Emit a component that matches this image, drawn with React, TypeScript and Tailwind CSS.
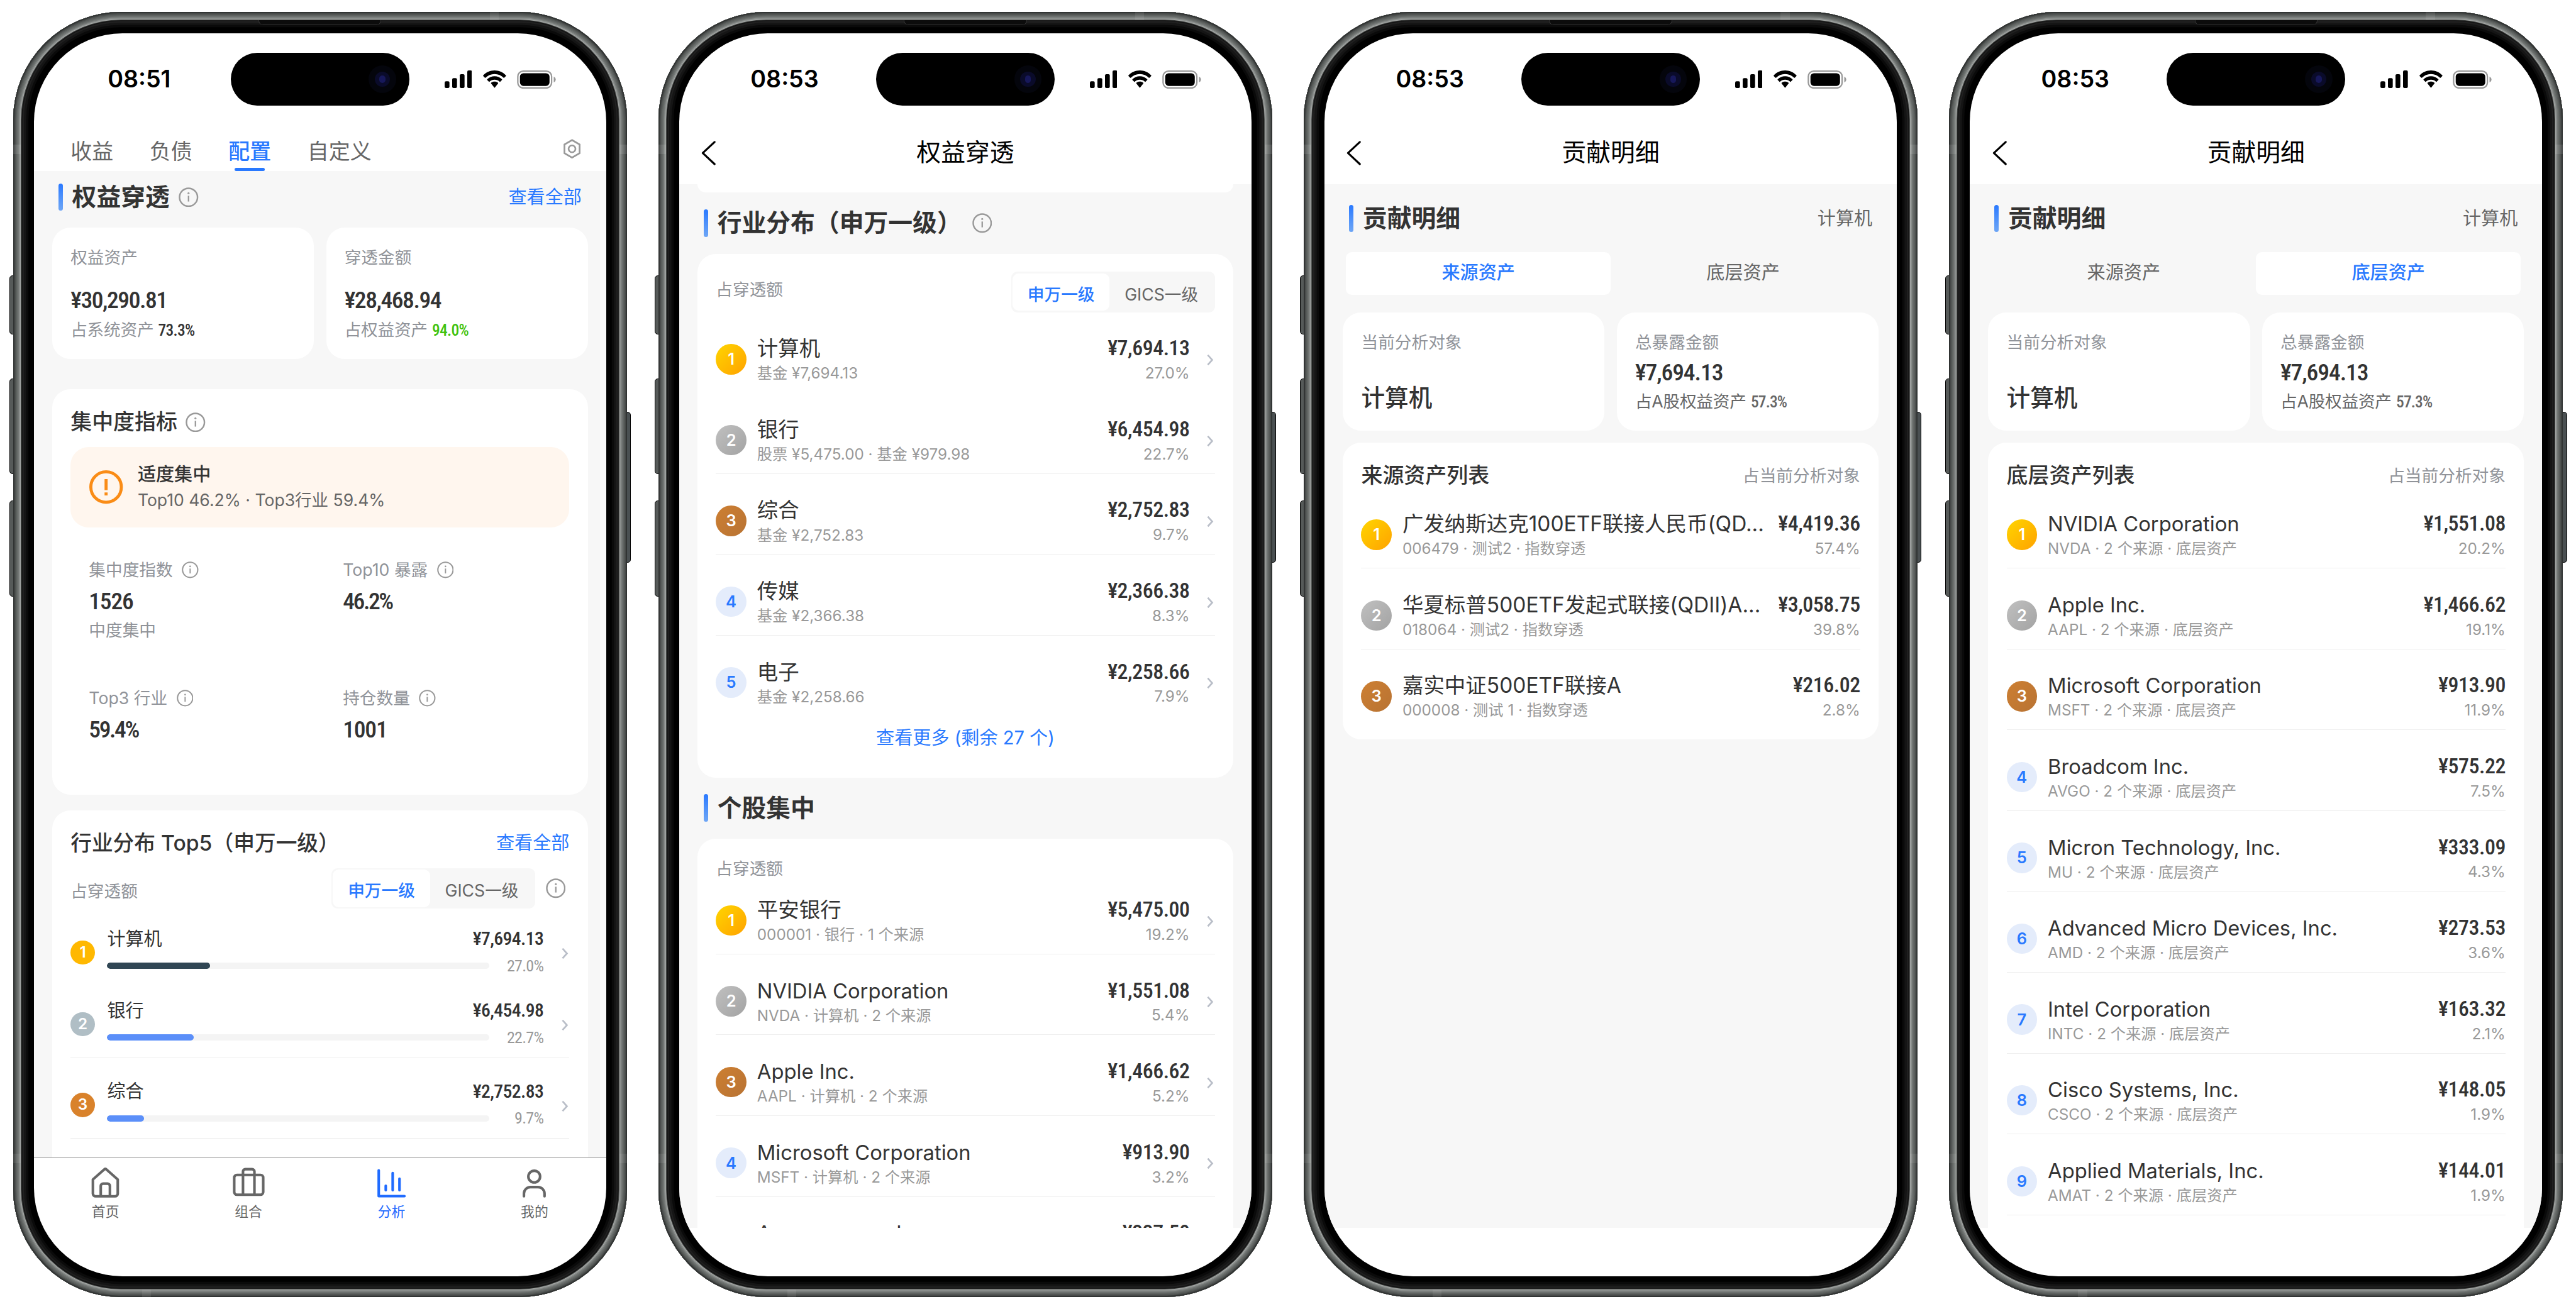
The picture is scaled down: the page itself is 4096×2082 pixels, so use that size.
import clsx from "clsx"
import type { ReactNode } from "react"

type Holding = { name: string; sub?: string; amount: string; pct?: string }

const topIndustries = [
  { name: "计算机", amount: "¥7,694.13", pct: 27.0, badge: "bg-[#ffb800]", bar: "bg-[#304654]" },
  { name: "银行", amount: "¥6,454.98", pct: 22.7, badge: "bg-[#b0bec5]", bar: "bg-[#5b8ff9]" },
  { name: "综合", amount: "¥2,752.83", pct: 9.7, badge: "bg-[#d9822b]", bar: "bg-[#5b8ff9]" },
]

const industries: Holding[] = [
  { name: "计算机", sub: "基金 ¥7,694.13", amount: "¥7,694.13", pct: "27.0%" },
  { name: "银行", sub: "股票 ¥5,475.00 · 基金 ¥979.98", amount: "¥6,454.98", pct: "22.7%" },
  { name: "综合", sub: "基金 ¥2,752.83", amount: "¥2,752.83", pct: "9.7%" },
  { name: "传媒", sub: "基金 ¥2,366.38", amount: "¥2,366.38", pct: "8.3%" },
  { name: "电子", sub: "基金 ¥2,258.66", amount: "¥2,258.66", pct: "7.9%" },
]

const stocks: Holding[] = [
  { name: "平安银行", sub: "000001 · 银行 · 1 个来源", amount: "¥5,475.00", pct: "19.2%" },
  { name: "NVIDIA Corporation", sub: "NVDA · 计算机 · 2 个来源", amount: "¥1,551.08", pct: "5.4%" },
  { name: "Apple Inc.", sub: "AAPL · 计算机 · 2 个来源", amount: "¥1,466.62", pct: "5.2%" },
  { name: "Microsoft Corporation", sub: "MSFT · 计算机 · 2 个来源", amount: "¥913.90", pct: "3.2%" },
  { name: "Amazon.com, Inc.", amount: "¥337.50" },
]

const funds: Holding[] = [
  { name: "广发纳斯达克100ETF联接人民币(QD...", sub: "006479 · 测试2 · 指数穿透", amount: "¥4,419.36", pct: "57.4%" },
  { name: "华夏标普500ETF发起式联接(QDII)A...", sub: "018064 · 测试2 · 指数穿透", amount: "¥3,058.75", pct: "39.8%" },
  { name: "嘉实中证500ETF联接A", sub: "000008 · 测试 1 · 指数穿透", amount: "¥216.02", pct: "2.8%" },
]

const underlying: Holding[] = [
  { name: "NVIDIA Corporation", sub: "NVDA · 2 个来源 · 底层资产", amount: "¥1,551.08", pct: "20.2%" },
  { name: "Apple Inc.", sub: "AAPL · 2 个来源 · 底层资产", amount: "¥1,466.62", pct: "19.1%" },
  { name: "Microsoft Corporation", sub: "MSFT · 2 个来源 · 底层资产", amount: "¥913.90", pct: "11.9%" },
  { name: "Broadcom Inc.", sub: "AVGO · 2 个来源 · 底层资产", amount: "¥575.22", pct: "7.5%" },
  { name: "Micron Technology, Inc.", sub: "MU · 2 个来源 · 底层资产", amount: "¥333.09", pct: "4.3%" },
  { name: "Advanced Micro Devices, Inc.", sub: "AMD · 2 个来源 · 底层资产", amount: "¥273.53", pct: "3.6%" },
  { name: "Intel Corporation", sub: "INTC · 2 个来源 · 底层资产", amount: "¥163.32", pct: "2.1%" },
  { name: "Cisco Systems, Inc.", sub: "CSCO · 2 个来源 · 底层资产", amount: "¥148.05", pct: "1.9%" },
  { name: "Applied Materials, Inc.", sub: "AMAT · 2 个来源 · 底层资产", amount: "¥144.01", pct: "1.9%" },
]

const metrics = [
  { label: "集中度指数", value: "1526", note: "中度集中" },
  { label: "Top10 暴露", value: "46.2%" },
  { label: "Top3 行业", value: "59.4%" },
  { label: "持仓数量", value: "1001" },
]

function InfoIcon({ className }: { className?: string }) {
  return (
    <svg viewBox="0 0 26 26" className={clsx("shrink-0 text-[#999]", className)} fill="none" stroke="currentColor">
      <circle cx="13" cy="13" r="11.8" strokeWidth="2" />
      <path d="M13 11v7.6" strokeWidth="1.9" />
      <circle cx="13" cy="7.6" r="1.3" fill="currentColor" stroke="none" />
    </svg>
  )
}

function Chevron() {
  return (
    <svg viewBox="0 0 9 14" className="h-3.5 w-[9px]" fill="none" stroke="#b9bec8" strokeWidth="2.200">
      <path d="M1.2 0.6 L7 7 L1.2 13.4" />
    </svg>
  )
}

function StatusBar({ time }: { time: string }) {
  return (
    <div className="flex h-[121px] shrink-0 items-center">
      <div className="w-[258px] pl-[18px] text-center text-[31px] font-semibold text-black">{time}</div>
      <div className="flex h-[69px] w-[234px] items-center justify-end rounded-full bg-black pr-[17px]">
        <div className="flex h-9 w-9 items-center justify-center rounded-full bg-[#04050c]">
          <div className="flex h-5 w-5 items-center justify-center rounded-full bg-[#0a0b2a]">
            <div className="h-2.5 w-2 rounded-full bg-[#17185a]" />
          </div>
        </div>
      </div>
      <div className="flex items-center pl-[46px]">
        <svg viewBox="0 0 19.4 12.4" className="h-[23px] w-9">
          <rect x="0" y="7.7" width="3.4" height="4.7" rx="1" />
          <rect x="5.33" y="5.4" width="3.4" height="7" rx="1" />
          <rect x="10.67" y="2.7" width="3.4" height="9.7" rx="1" />
          <rect x="16" y="0" width="3.4" height="12.4" rx="1" />
        </svg>
        <svg viewBox="0 0 17 12.4" className="ml-3.5 h-[23px] w-8">
          <path d="M8.5 2.6c2.5 0 4.7 1 6.4 2.6.1.1.3.1.4 0l1.2-1.2c.2-.2.2-.4 0-.6C14.300 1.200 11.500 0 8.500 0S2.700 1.200.5 3.400c-.2.2-.2.4 0 .6l1.200 1.200c.1.1.3.1.4 0C3.800 3.600 6 2.600 8.500 2.600zm0 4c1.400 0 2.600.5 3.600 1.400.1.1.3.1.4 0l1.200-1.200c.2-.2.2-.4 0-.6C12.300 4.900 10.500 4.100 8.500 4.100s-3.800.8-5.200 2.100c-.2.2-.2.4 0 .6L4.500 8c.1.1.3.1.4 0 1-.9 2.200-1.400 3.600-1.400zm2.400 2.700c.2-.2.2-.4 0-.6-.7-.5-1.500-.8-2.400-.8s-1.700.3-2.400.8c-.2.200-.2.4 0 .6l2.200 2.800c.1.200.3.200.4 0z" />
        </svg>
        <svg viewBox="0 0 27.4 13" className="ml-[13px] h-6 w-[51px]">
          <rect x="0.5" y="0.5" width="24" height="12" rx="3.8" fill="none" stroke="#999" />
          <rect x="2" y="2" width="21" height="9" rx="2.5" />
          <path d="M26 4.500c.9.300 1.400 1.100 1.400 2s-.5 1.700-1.400 2z" fill="#999" />
        </svg>
      </div>
    </div>
  )
}

// Device frame; children are laid out on a 750-unit wide canvas
function Phone({ time, children }: { time: string; children: ReactNode }) {
  return (
    <div className="relative h-[1685px] w-[805px] shrink-0">
      <div className="absolute top-[345px] -left-[5px] h-[78px] w-2.5 rounded-sm border border-black bg-[#565a59]" />
      <div className="absolute top-[480px] -left-[5px] h-[126px] w-2.5 rounded-sm border border-black bg-[#565a59]" />
      <div className="absolute top-[640px] -left-[5px] h-[126px] w-2.5 rounded-sm border border-black bg-[#565a59]" />
      <div className="absolute top-[524px] -right-[5px] h-[198px] w-2.5 rounded-sm border border-black bg-[#4a5052]" />
      <div className="relative h-full w-full rounded-[141px] bg-black p-[27.5px] shadow-[inset_0_0_0_1.5px_#303332,inset_0_0_0_3px_#484b4a,inset_0_0_0_4.500px_#585c5a,inset_0_0_0_6px_#656967,inset_0_0_0_7.500px_#737775,inset_0_0_0_9px_#8a8e8c,inset_0_0_0_10px_#a4a7a5,inset_0_0_0_11px_#3c3e3d,inset_0_0_0_12px_#111,inset_0_0_0_14px_#202020,inset_0_0_0_17px_#151515,inset_0_0_0_20px_#0a0a0a]">
        <div className="absolute top-0 left-[625px] h-2.5 w-3 bg-white/8" />
        <div className="absolute bottom-0 left-[169px] h-2.5 w-3 bg-white/8" />
        <div className="absolute top-[174px] left-0 h-3 w-2.5 bg-white/10" />
        <div className="absolute top-[174px] right-0 h-3 w-2.5 bg-white/10" />
        <div className="absolute bottom-[176px] left-0 h-3 w-2.5 bg-white/8" />
        <div className="absolute right-0 bottom-[176px] h-3 w-2.5 bg-white/8" />
        <div className="absolute top-2.5 left-[322px] h-[7px] w-[161px] rounded-b-md border border-t-0 border-[#333] bg-[#0c0c0c]" />
        <div className="flex h-[1630px] w-[750px] flex-col overflow-hidden rounded-[116px] bg-white">
          <StatusBar time={time} />
          {children}
        </div>
      </div>
    </div>
  )
}

function NavHeader({ title }: { title: string }) {
  return (
    <div className="grid h-[77px] shrink-0 grid-cols-3 items-center pb-2">
      <svg viewBox="0 0 19 32" className="mt-1 ml-[29px] h-8 w-[19px]" fill="none" stroke="black" strokeWidth="2.600">
        <path d="M17.500 1.500 L2 16 L17.500 30.500" strokeLinecap="round" strokeLinejoin="round" />
      </svg>
      <h1 className="text-center text-[32px] leading-[44px] text-black">{title}</h1>
    </div>
  )
}

function SectionHeader({ title, info, className, children }: { title: string; info?: string; className?: string; children?: ReactNode }) {
  return (
    <div className={clsx("flex h-9 items-center pr-8 pl-8", className)}>
      <div className="h-9 w-1.5 rounded-[3px] bg-linear-to-b from-[#2979ff] to-[#6ea6f5]" />
      <h2 className="ml-3 -mt-px text-[32px] leading-9 font-semibold text-[#333]">{title}</h2>
      {info && <InfoIcon className={clsx("h-[26px] w-[26px]", info)} />}
      <div className="ml-auto">{children}</div>
    </div>
  )
}

function Segment() {
  return (
    <div className="flex h-[53px] rounded-lg bg-[#f7f7f7] p-[2px] text-[22px] leading-[56px]">
      <div className="w-[127px] rounded-lg bg-white text-center font-medium text-[#2979ff]">申万一级</div>
      <div className="w-[136px] text-center text-[#666]">GICS一级</div>
    </div>
  )
}

const badgeStyles = [
  "bg-linear-to-br from-[#ffd500] to-[#ffa200] text-white",
  "bg-linear-to-br from-[#c0c0c0] to-[#a3a3a3] text-white",
  "bg-linear-to-br from-[#cd7f32] to-[#b87333] text-white",
]

function HoldingRow({ item, rank, arrow, divider }: { item: Holding; rank: number; arrow?: boolean; divider?: boolean }) {
  const cjk = /[\u4e00-\u9fff]/.test(item.name)
  return (
    <div className={clsx("flex h-[106px] items-center border-b-[1.200px] pt-[18px]", divider ? "border-[#eee]" : "border-transparent")}>
      <div
        className={clsx(
          "flex h-10 w-10 shrink-0 items-center justify-center rounded-full text-[21px] font-semibold",
          badgeStyles[rank - 1] ?? "bg-[#e4ecfb] text-[#2979ff]",
        )}
      >
        {rank}
      </div>
      <div className="ml-[14px] whitespace-nowrap">
        <p className={clsx("leading-[38px] text-[#333]", cjk ? "text-[27.600px]" : "text-[27px]")}>{item.name}</p>
        <p className="h-7 text-[20px] leading-7 text-[#999]">{item.sub}</p>
      </div>
      <div className="ml-auto text-right">
        <p className="font-['Roboto_Condensed'] text-[28px] leading-[37px] font-medium tracking-[-0.400px] text-[#333]">{item.amount}</p>
        <p className="h-[29px] text-[20px] leading-[30px] text-[#999]">{item.pct}</p>
      </div>
      {arrow && (
        <div className="mr-px ml-[23px] pt-0.5">
          <Chevron />
        </div>
      )}
    </div>
  )
}

function HomeIcon() {
  return (
    <path d="M2.700 16.500 L17.600 3.300 a2.100 2.100 0 0 1 2.800 0 L35.300 16.500 V35 a3.500 3.500 0 0 1 -3.500 3.500 H6.200 A3.500 3.500 0 0 1 2.700 35 Z M13 38.500 V25 a3 3 0 0 1 3 -3 h6 a3 3 0 0 1 3 3 V38.500" />
  )
}

function CaseIcon() {
  return (
    <path d="M3.500 10.500 h31 a3.500 3.500 0 0 1 3.500 3.500 V33 a3.500 3.500 0 0 1 -3.500 3.500 h-31 A3.500 3.500 0 0 1 0 33 V14 a3.500 3.500 0 0 1 3.500 -3.500 Z M11.500 36.500 V6 a3 3 0 0 1 3 -3 h9 a3 3 0 0 1 3 3 V36.500" />
  )
}

function ChartIcon() {
  return <path d="M2.300 4.500 V38.300 H36 M11.500 30.500 V24.800 M20.600 30.500 V8 M29.500 30.500 V15.500" />
}

function UserIcon() {
  return (
    <>
      <circle cx="19" cy="12.700" r="7.700" />
      <path d="M5.500 38.500 V35 a8.500 8.500 0 0 1 8.500 -8.500 H24 a8.500 8.500 0 0 1 8.500 8.500 V38.500" />
    </>
  )
}

const navItems = [
  { label: "首页", icon: <HomeIcon /> },
  { label: "组合", icon: <CaseIcon /> },
  { label: "分析", icon: <ChartIcon />, active: true },
  { label: "我的", icon: <UserIcon /> },
]

function OverviewScreen() {
  return (
    <Phone time="08:51">
      <div className="flex h-[60px] shrink-0 items-start gap-[47.500px] pr-[33px] pl-12 text-[28px] text-[#666]">
        {["收益", "负债", "配置", "自定义"].map((tab) => (
          <div key={tab} className={clsx("flex flex-col items-center pt-4", tab === "配置" && "font-medium text-[#2979ff]")}>
            <span className="leading-[37px]">{tab}</span>
            {tab === "配置" && <div className="mt-[3px] h-1 w-10 rounded-sm bg-[#2979ff]" />}
          </div>
        ))}
        <svg viewBox="0 0 24 27" className="mt-[18px] ml-auto h-[26px] w-6" fill="none" stroke="#999" strokeWidth="2.300">
          <path d="M12 1.500 L22.300 7.500 V19.500 L12 25.500 L1.700 19.500 V7.500 Z" />
          <circle cx="12" cy="13.500" r="4.700" />
        </svg>
      </div>

      <div className="h-[1293px] shrink-0 overflow-hidden bg-[#f7f7f7] px-6">
        <SectionHeader title="权益穿透" info="ml-3" className="-mx-6 mt-4">
          <span className="text-[24px] text-[#2979ff]">查看全部</span>
        </SectionHeader>

        <div className="mt-[22px] grid grid-cols-2 gap-4">
          <div className="h-[172px] rounded-3xl bg-white p-6">
            <p className="text-[22px] leading-[30px] text-[#909399]">权益资产</p>
            <p className="mt-[21px] font-['Roboto_Condensed'] text-[31px] leading-10 font-medium tracking-[-1.200px] text-[#333]">¥30,290.81</p>
            <p className="mt-1 text-[22px] leading-[30px] tracking-[-0.200px] text-[#909399]">
              占系统资产 <span className="font-['Roboto_Condensed'] text-[21px] font-medium tracking-[-0.600px] text-[#333]">73.3%</span>
            </p>
          </div>
          <div className="h-[172px] rounded-3xl bg-white p-6">
            <p className="text-[22px] leading-[30px] text-[#909399]">穿透金额</p>
            <p className="mt-[21px] font-['Roboto_Condensed'] text-[31px] leading-10 font-medium tracking-[-1.200px] text-[#333]">¥28,468.94</p>
            <p className="mt-1 text-[22px] leading-[30px] tracking-[-0.200px] text-[#909399]">
              占权益资产 <span className="font-['Roboto_Condensed'] text-[21px] font-medium tracking-[-0.600px] text-[#3fc30f]">94.0%</span>
            </p>
          </div>
        </div>

        <div className="mt-10 h-[532px] rounded-3xl bg-white p-6">
          <div className="flex h-[38px] items-center">
            <h3 className="text-[28px] font-medium text-[#333]">集中度指标</h3>
            <InfoIcon className="ml-[11px] h-[26px] w-[26px]" />
          </div>
          <div className="mt-3.5 flex h-[105px] items-center rounded-3xl bg-[#fff6ee] px-6">
            <svg viewBox="0 0 44 44" className="ml-px h-11 w-11" fill="none" stroke="#fa8c16" strokeWidth="4">
              <circle cx="22" cy="22" r="20" />
              <path d="M22 11.500 V26 M22 29 V33" />
            </svg>
            <div className="ml-[19px]">
              <p className="text-[24px] leading-[34px] font-medium text-[#333]">适度集中</p>
              <p className="text-[21.900px] leading-[34px] text-[#666]">Top10 46.2% · Top3行业 59.4%</p>
            </div>
          </div>
          <div className="mt-4 grid grid-cols-2 gap-3">
            {metrics.map((m) => (
              <div key={m.label} className="h-[156px] px-6 pt-6">
                <div className="flex items-center">
                  <span className="text-[22px] leading-8 text-[#909399]">{m.label}</span>
                  <InfoIcon className="ml-3 h-[22px] w-[22px]" />
                </div>
                <p
                  className={clsx(
                    "mt-[5px] font-['Roboto_Condensed'] text-[31px] leading-10 font-medium text-[#333]",
                    m.value.endsWith("%") ? "tracking-[-2px]" : "tracking-[-1px]",
                  )}
                >
                  {m.value}
                </p>
                {m.note && <p className="mt-[3px] text-[22px] leading-[30px] text-[#909399]">{m.note}</p>}
              </div>
            ))}
          </div>
        </div>

        <div className="mt-5 h-[600px] rounded-3xl bg-white p-6">
          <div className="flex h-[38px] items-center justify-between whitespace-nowrap">
            <h3 className="text-[27.800px] font-medium text-[#333]">行业分布 Top5（申万一级）</h3>
            <span className="text-[24px] text-[#2979ff]">查看全部</span>
          </div>
          <div className="mt-3.5 flex items-center">
            <span className="pt-[7px] text-[22px] text-[#909399]">占穿透额</span>
            <div className="mr-3.5 ml-auto">
              <Segment />
            </div>
            <InfoIcon className="mr-[5px] h-[26px] w-[26px]" />
          </div>
          {topIndustries.map((item, i) => (
            <div
              key={item.name}
              className={clsx(
                "flex items-center border-b-[1.200px]",
                i === 0 ? "h-[90px] border-transparent pt-[26px]" : "h-[106px] border-[#eee] pt-[18px]",
              )}
            >
              <div className={clsx("flex h-8 w-8 shrink-0 items-center justify-center rounded-full text-[20px] font-semibold text-white", item.badge)}>
                {i + 1}
              </div>
              <div className="ml-4 w-[572px]">
                <div className="flex h-[35px] items-center justify-between">
                  <span className="text-[24px] text-[#333]">{item.name}</span>
                  <span className="font-['Roboto_Condensed'] text-[24.500px] font-medium tracking-[-0.500px] text-[#333]">{item.amount}</span>
                </div>
                <div className="flex h-[35px] items-center justify-between">
                  <div className="h-2 w-[501px] overflow-hidden rounded bg-[#f4f4f4]">
                    <div className={clsx("h-full rounded", item.bar)} style={{ width: `${item.pct}%` }} />
                  </div>
                  <span className="font-['Roboto_Condensed'] text-[21.500px] tracking-[-0.600px] text-[#999]">{item.pct.toFixed(1)}%</span>
                </div>
              </div>
              <div className="ml-6 pt-[3px]">
                <Chevron />
              </div>
            </div>
          ))}
        </div>
      </div>

      <div className="grid flex-1 grid-cols-4 border-t-[1.200px] border-[#999]">
        {navItems.map((item) => (
          <div key={item.label} className={clsx("flex flex-col items-center pt-3 text-[18px]", item.active ? "text-[#1f6bff]" : "text-[#666]")}>
            <svg viewBox="-2 0 42 42" className="h-[42px] w-[42px]" fill="none" stroke="currentColor" strokeWidth="3.400" strokeLinecap="round" strokeLinejoin="round">
              {item.icon}
            </svg>
            <span className="mt-[3px] leading-7">{item.label}</span>
          </div>
        ))}
      </div>
    </Phone>
  )
}

function PenetrationScreen() {
  return (
    <Phone time="08:53">
      <NavHeader title="权益穿透" />
      <div className="h-[1369px] shrink-0 overflow-hidden bg-[#f7f7f7] px-6">
        <div className="h-[11px] rounded-b-3xl bg-white" />
        <SectionHeader title="行业分布（申万一级）" info="ml-3.5" className="-mx-6 mt-[22px]" />
        <div className="mt-[23px] h-[686px] rounded-3xl bg-white px-6 pt-[23px]">
          <div className="flex items-start justify-between">
            <span className="pt-2 text-[22px] leading-[30px] text-[#909399]">占穿透额</span>
            <Segment />
          </div>
          {industries.map((item, i) => (
            <HoldingRow key={item.name} item={item} rank={i + 1} arrow divider={i > 0 && i < 4} />
          ))}
          <p className="pt-[13px] text-center text-[24px] leading-8 text-[#2979ff]">查看更多 (剩余 27 个)</p>
        </div>
        <SectionHeader title="个股集中" className="-mx-6 mt-[22px]" />
        <div className="mt-[22px] h-[600px] rounded-t-3xl bg-white px-6 pt-6">
          <p className="-mb-2 text-[22px] leading-[30px] text-[#909399]">占穿透额</p>
          {stocks.map((item, i) => (
            <HoldingRow key={item.name} item={item} rank={i + 1} arrow divider />
          ))}
        </div>
      </div>
    </Phone>
  )
}

const tabs = ["来源资产", "底层资产"]

function DetailScreen({ active, items, lastDivider }: { active: string; items: Holding[]; lastDivider?: boolean }) {
  return (
    <Phone time="08:53">
      <NavHeader title="贡献明细" />
      <div className="h-[1369px] shrink-0 overflow-hidden bg-[#f7f7f7] px-6">
        <SectionHeader title="贡献明细" className="-mx-6 mt-[27px]">
          <span className="text-[24px] text-[#666]">计算机</span>
        </SectionHeader>
        <div className="mt-[22px] grid h-16 grid-cols-2 p-1 text-center text-[24px] leading-[55px]">
          {tabs.map((tab) => (
            <div key={tab} className={tab === active ? "rounded-lg bg-white font-medium text-[#2979ff]" : "text-[#666]"}>
              {tab}
            </div>
          ))}
        </div>
        <div className="mt-[19px] grid grid-cols-2 gap-4">
          <div className="h-[155px] rounded-3xl bg-white p-6">
            <p className="text-[22px] leading-[30px] text-[#909399]">当前分析对象</p>
            <p className="mt-[39px] text-[31px] leading-10 font-medium text-[#333]">计算机</p>
          </div>
          <div className="h-[155px] rounded-3xl bg-white p-6">
            <p className="text-[22px] leading-[30px] text-[#909399]">总暴露金额</p>
            <p className="mt-[7px] font-['Roboto_Condensed'] text-[31px] leading-9 font-medium tracking-[-0.900px] text-[#333]">¥7,694.13</p>
            <p className="mt-[5px] text-[22px] leading-[30px] tracking-[-0.200px] text-[#666]">
              占A股权益资产 <span className="font-['Roboto_Condensed'] text-[21px] font-medium tracking-[-0.700px]">57.3%</span>
            </p>
          </div>
        </div>
        <div className={clsx("mt-4 rounded-3xl bg-white px-6 pt-6", lastDivider ? "h-[1200px]" : "h-[389px]")}>
          <div className="-mb-[3px] flex h-[38px] items-center justify-between">
            <h3 className="text-[28px] font-medium text-[#333]">{active}列表</h3>
            <span className="text-[22px] text-[#909399]">占当前分析对象</span>
          </div>
          {items.map((item, i) => (
            <HoldingRow key={item.name} item={item} rank={i + 1} divider={lastDivider || i < items.length - 1} />
          ))}
        </div>
      </div>
    </Phone>
  )
}

export default function App() {
  return (
    <div className="flex h-[1716px] w-[3376px] gap-[41px] overflow-hidden bg-white pt-4 pl-[17px] font-['Inter','Noto_Sans_CJK_SC',sans-serif] [zoom:1.21296]">
      <OverviewScreen />
      <PenetrationScreen />
      <DetailScreen active="来源资产" items={funds} />
      <DetailScreen active="底层资产" items={underlying} lastDivider />
    </div>
  )
}
